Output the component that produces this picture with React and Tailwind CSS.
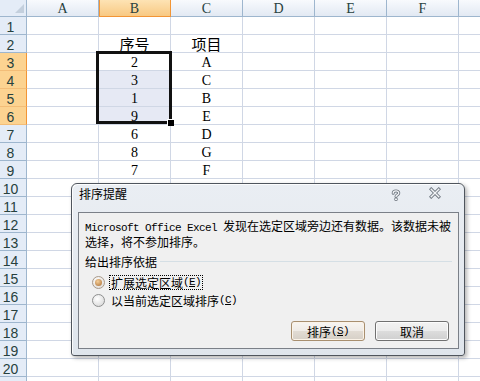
import React from "react";

const COLS = ["A", "B", "C", "D", "E", "F", "G"];
const DATA = {
  2: { B: "序号", C: "项目" },
  3: { B: "2", C: "A" },
  4: { B: "3", C: "C" },
  5: { B: "1", C: "B" },
  6: { B: "9", C: "E" },
  7: { B: "6", C: "D" },
  8: { B: "8", C: "G" },
  9: { B: "7", C: "F" },
};
const ROWS = Array.from({ length: 21 }, (_, i) => i + 1);

function ColHeader({ c }) {
  if (c === "B") {
    return (
      <div className="flex justify-center items-start overflow-hidden border-r border-b border-[#f29536] shadow-[inset_1px_0_0_#f29536] bg-[linear-gradient(to_bottom,#fde3b4,#f8c983)] text-[#27413e] [font-family:'Liberation_Serif',serif] text-[14px] leading-[18px]">
        {c}
      </div>
    );
  }
  return (
    <div className="flex justify-center items-start overflow-hidden border-r border-b border-[#9eb6ce] bg-[linear-gradient(to_bottom,#f8fafd,#e2e9f3)] text-[#27413e] [font-family:'Liberation_Serif',serif] text-[14px] leading-[18px]">
      {c === "G" ? "" : c}
    </div>
  );
}

function RowHeader({ r }) {
  const sel = r >= 3 && r <= 6;
  if (sel) {
    return (
      <div className="flex justify-center overflow-hidden border-r border-r-[#f29536] border-b border-b-[#f3bd78] bg-[#fcd391] text-[#27413e] [font-family:'Liberation_Sans',sans-serif] text-[14px] leading-[14px] pt-[3px] pr-[5px]">
        {r}
      </div>
    );
  }
  return (
    <div className="flex justify-center overflow-hidden border-r border-b border-[#9eb6ce] bg-[#e4ecf7] text-[#27413e] [font-family:'Liberation_Sans',sans-serif] text-[14px] leading-[14px] pt-[3px] pr-[5px]">
      {r > 20 ? "" : r}
    </div>
  );
}

function Cell({ r, c }) {
  const v = (DATA[r] && DATA[r][c]) || "";
  const sel = c === "B" && r >= 4 && r <= 6;
  const cjk = /[\u4e00-\u9fff]/.test(v);
  return (
    <div
      className={
        sel
          ? "flex justify-center items-end border-r border-b border-[#d0d7e5] bg-[#e6e9f4]"
          : "flex justify-center items-end border-r border-b border-[#d0d7e5] bg-white"
      }
    >
      {v ? (
        <span
          className={
            cjk
              ? "[font-family:'Noto_Sans_CJK_SC',sans-serif] text-[15px] leading-[17px] text-black whitespace-nowrap"
              : "[font-family:'Liberation_Serif',serif] text-[14px] leading-[14px] text-black"
          }
        >
          {v}
        </span>
      ) : null}
    </div>
  );
}

function Radio({ checked }) {
  return checked ? (
    <span className="w-[13px] h-[13px] shrink-0 rounded-full border border-[#a8998a] bg-[radial-gradient(circle_at_40%_35%,#ffffff,#d9d6d2)] flex items-center justify-center">
      <span className="w-[7px] h-[7px] rounded-full bg-[radial-gradient(circle_at_40%_35%,#f6cf98,#a86d35)]" />
    </span>
  ) : (
    <span className="w-[13px] h-[13px] shrink-0 rounded-full border border-[#8e8f8f] bg-[radial-gradient(circle_at_40%_35%,#ffffff,#d2d2d2)]" />
  );
}

const mono = "[font-family:'Liberation_Mono',monospace] text-[11px] tracking-[-0.6px]";

export default function App() {
  return (
    <div className="relative w-[480px] h-[381px] overflow-hidden bg-white [font-family:'Noto_Sans_CJK_SC',sans-serif]">
      <div className="grid grid-cols-[27px_repeat(7,72px)] grid-rows-[17px_repeat(21,18px)]">
        <div className="relative border-r border-b border-[#9eb6ce] bg-[#e4ecf7]">
          <svg className="absolute left-0 top-0" width="26" height="16" viewBox="0 0 26 16">
            <polygon points="24,4 24,13 15,13" fill="#c3cfdd" />
          </svg>
        </div>
        {COLS.map((c) => (
          <ColHeader key={c} c={c} />
        ))}
        {ROWS.map((r) => (
          <React.Fragment key={r}>
            <RowHeader r={r} />
            {COLS.map((c) => (
              <Cell key={c} r={r} c={c} />
            ))}
          </React.Fragment>
        ))}
      </div>

      {/* selection border */}
      <div className="absolute left-[96px] top-[51px] w-[76px] h-[73px] border-[3px] border-[#111]" />
      <div className="absolute left-[167px] top-[119px] w-[7px] h-[7px] bg-black border-l border-t border-white" />

      {/* dialog */}
      <div className="absolute left-[71px] top-[183px] w-[394px] h-[173px] flex flex-col rounded-t-[6px] rounded-b-[3px] border border-[#4f555d] bg-[linear-gradient(to_bottom,#eaeef3,#dfe5ec)] shadow-[inset_1px_1px_0_rgba(255,255,255,0.85),2px_2px_4px_rgba(0,0,0,0.3)]">
        <div className="h-[28px] flex items-start pl-[7px] pr-[23px]">
          <span className="pt-[2px] text-[12px] leading-[16px] text-black">排序提醒</span>
          <div className="flex-1" />
          <svg className="mt-[5px]" width="12" height="12" viewBox="0 0 12 12">
            <path d="M3.2 4.2 C3.2 1.2 8.8 1.2 8.8 4 C8.8 5.9 6 5.8 6 7.6" fill="none" stroke="#6f7780" strokeWidth="3" strokeLinecap="round" />
            <path d="M3.2 4.2 C3.2 1.2 8.8 1.2 8.8 4 C8.8 5.9 6 5.8 6 7.6" fill="none" stroke="#f3f5f7" strokeWidth="1.3" strokeLinecap="round" />
            <circle cx="6" cy="10.3" r="1.5" fill="#f3f5f7" stroke="#6f7780" strokeWidth="0.9" />
          </svg>
          <svg className="mt-[3px] ml-[27px]" width="12" height="12" viewBox="0 0 12 12">
            <path d="M2.2 2.2 L9.8 9.8 M9.8 2.2 L2.2 9.8" stroke="#6f7780" strokeWidth="3.2" strokeLinecap="square" />
            <path d="M2.2 2.2 L9.8 9.8 M9.8 2.2 L2.2 9.8" stroke="#f3f5f7" strokeWidth="1.4" strokeLinecap="square" />
          </svg>
        </div>
        <div className="ml-[6px] mr-[5px] mb-[6px] flex-1 flex flex-col border border-[#7b8088] bg-[#f0f0f0] pl-[6px] pt-[6px] text-[12px] text-black">
          <p className="leading-[13px] whitespace-nowrap">
            <span className={mono}>Microsoft Office Excel </span>
            发现在选定区域旁边还有数据。该数据未被
            <br />
            选择，将不参加排序。
          </p>
          <div className="mt-[7px] h-[13px] flex items-center pr-[6px]">
            <span className="leading-[13px]">给出排序依据</span>
            <div className="ml-[3px] flex-1 h-px bg-[#d5dfe5]" />
          </div>
          <div className="mt-[5px] h-[18px] flex items-center pl-[7px]">
            <Radio checked />
            <span className="ml-[4px] h-[15px] flex items-center px-[1px] border border-dotted border-black leading-[13px] whitespace-nowrap">
              扩展选定区域<span className={mono}>
                (<span className="underline">E</span>)
              </span>
            </span>
          </div>
          <div className="h-[18px] flex items-center pl-[7px]">
            <Radio />
            <span className="ml-[4px] h-[15px] flex items-center px-[1px] border border-transparent leading-[13px] whitespace-nowrap">
              以当前选定区域排序<span className={mono}>
                (<span className="underline">C</span>)
              </span>
            </span>
          </div>
          <div className="mt-auto flex justify-end gap-[10px] pr-[9px] pb-[7px]">
            <button className="w-[74px] h-[20px] flex items-center justify-center rounded-[3px] border border-[#a88f6f] bg-[linear-gradient(to_bottom,#f8f5f1_0%,#efebe6_50%,#e2dcd4_50%,#d6cfc6_100%)] shadow-[inset_0_0_0_1px_#fbf3e8] text-[12px] leading-[13px] text-black">
              排序<span className={mono}>
                (<span className="underline">S</span>)
              </span>
            </button>
            <button className="w-[74px] h-[20px] flex items-center justify-center rounded-[3px] border border-[#707070] bg-[linear-gradient(to_bottom,#f2f2f2_0%,#ebebeb_50%,#dddddd_50%,#cfcfcf_100%)] shadow-[inset_0_0_0_1px_#fcfcfc] text-[12px] leading-[13px] text-black">
              取消
            </button>
          </div>
        </div>
      </div>
    </div>
  );
}
